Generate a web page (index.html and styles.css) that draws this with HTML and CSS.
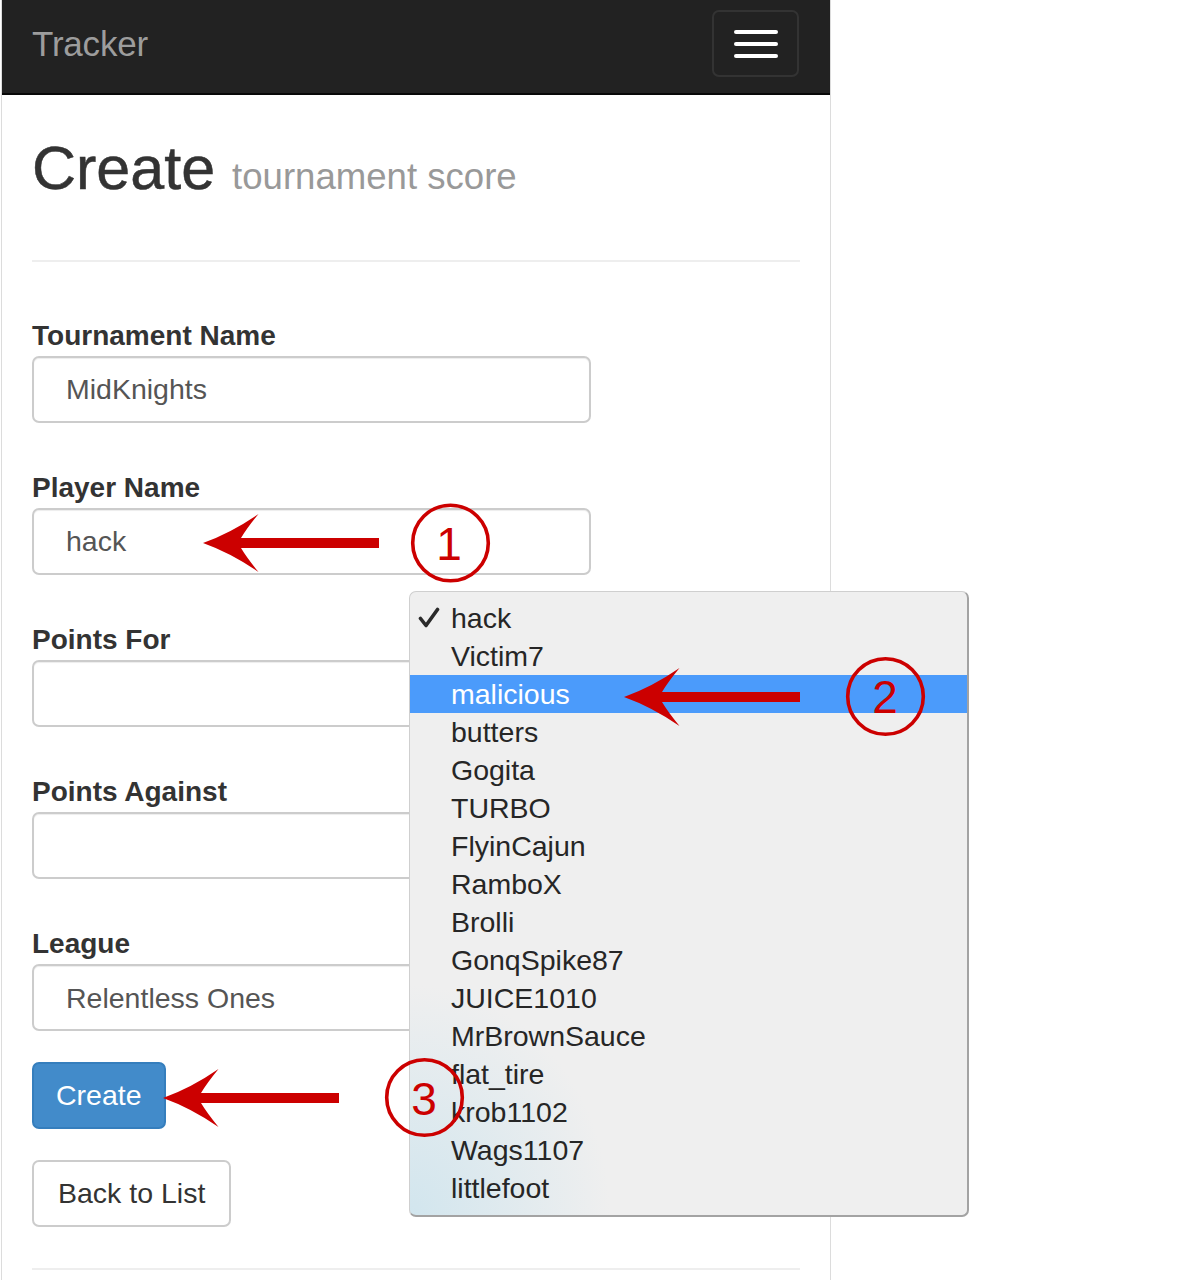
FILE: index.html
```html
<!DOCTYPE html>
<html lang="en">
<head>
<meta charset="utf-8">
<title>Create - Tracker</title>
<link rel="stylesheet" href="styles.css">
</head>
<body>
<div class="page">
  <nav class="navbar">
    <a class="brand">Tracker</a>
    <button class="toggle" type="button" aria-label="Toggle navigation">
      <span class="bar"></span><span class="bar"></span><span class="bar"></span>
    </button>
  </nav>
  <main class="container">
    <div class="page-header">
      <h1>Create <small>tournament score</small></h1>
    </div>
    <form class="form">
      <div class="form-group">
        <label class="label">Tournament Name</label>
        <input class="control" type="text" value="MidKnights">
      </div>
      <div class="form-group">
        <label class="label">Player Name</label>
        <input class="control" type="text" value="hack">
      </div>
      <div class="form-group">
        <label class="label">Points For</label>
        <input class="control" type="text" value="">
      </div>
      <div class="form-group">
        <label class="label">Points Against</label>
        <input class="control" type="text" value="">
      </div>
      <div class="form-group last">
        <label class="label">League</label>
        <select class="control select"><option>Relentless Ones</option></select>
      </div>
      <div class="btn-row">
        <button class="btn btn-primary" type="button">Create</button>
      </div>
      <div class="btn-row">
        <a class="btn btn-default">Back to List</a>
      </div>
    </form>
    <div class="rule"></div>
  </main>
</div>

<div class="menu">
  <div class="opt selected"><svg class="check" width="22" height="22" viewBox="0 0 22 22"><path d="M2.5 11.5 L8 18.5 L19.5 2.5" fill="none" stroke="#2a2a2a" stroke-width="3.6" stroke-linecap="round" stroke-linejoin="round"/></svg>hack</div>
  <div class="opt">Victim7</div>
  <div class="opt active">malicious</div>
  <div class="opt">butters</div>
  <div class="opt">Gogita</div>
  <div class="opt">TURBO</div>
  <div class="opt">FlyinCajun</div>
  <div class="opt">RamboX</div>
  <div class="opt">Brolli</div>
  <div class="opt">GonqSpike87</div>
  <div class="opt">JUICE1010</div>
  <div class="opt">MrBrownSauce</div>
  <div class="opt">flat_tire</div>
  <div class="opt">krob1102</div>
  <div class="opt">Wags1107</div>
  <div class="opt">littlefoot</div>
</div>

<svg class="annotations" width="1200" height="1280" viewBox="0 0 1200 1280">
  <defs>
    <path id="arrow" d="M0 0 Q28 -10 55.5 -29 Q44 -15 38 -5 L176 -5 L176 5 L38 5 Q44 15 55.5 29 Q28 10 0 0 Z" fill="#cc0000"/>
  </defs>
  <use href="#arrow" x="203" y="543"/>
  <use href="#arrow" x="624" y="697"/>
  <use href="#arrow" x="163" y="1098"/>
  <circle cx="450.5" cy="543" r="37.8" fill="none" stroke="#cc0000" stroke-width="3.6"/>
  <circle cx="885.5" cy="696.5" r="37.8" fill="none" stroke="#cc0000" stroke-width="3.6"/>
  <circle cx="424.5" cy="1097.5" r="37.8" fill="none" stroke="#cc0000" stroke-width="3.6"/>
  <text class="num" x="449" y="560">1</text>
  <text class="num" x="885" y="713">2</text>
  <text class="num" x="424" y="1115">3</text>
</svg>
</body>
</html>
```

FILE: styles.css
```css
html, body {
  margin: 0;
  padding: 0;
  background: #fff;
}

body {
  font-family: "Liberation Sans", Arial, Helvetica, sans-serif;
  color: #333;
}

.page {
  margin-left: 1px;
  width: 828px;
  min-height: 1280px;
  border-left: 1px solid #dcdcdc;
  border-right: 1px solid #dcdcdc;
}

/* Navbar */
.navbar {
  height: 93px;
  background: #222;
  border-bottom: 2px solid #080808;
  display: flex;
  justify-content: space-between;
  align-items: flex-start;
  padding: 0 31px 0 30px;
}

.brand {
  font-size: 35px;
  line-height: 88px;
  color: #9d9d9d;
  letter-spacing: -0.2px;
}

.toggle {
  box-sizing: border-box;
  margin-top: 10px;
  width: 87px;
  height: 67px;
  background: transparent;
  border: 2px solid #333;
  border-radius: 7px;
  display: flex;
  flex-direction: column;
  justify-content: center;
  align-items: center;
  gap: 8px;
  padding: 0;
}

.bar {
  display: block;
  width: 44px;
  height: 4px;
  border-radius: 2px;
  background: #fff;
}

/* Content */
.container {
  padding: 0 30px;
}

.page-header {
  margin-top: 40px;
  padding-bottom: 59px;
  border-bottom: 2px solid #eee;
}

.page-header h1 {
  margin: 0;
  font-size: 61px;
  line-height: 66px;
  height: 66px;
  font-weight: 400;
  color: #333;
  -webkit-text-stroke: 0.5px #333;
}

.page-header h1 small {
  font-size: 36.6px;
  line-height: 1;
  color: #999;
  -webkit-text-stroke: 0;
}

.form {
  margin-top: 57px;
}

.form-group {
  margin-bottom: 48px;
}

.form-group.last {
  margin-bottom: 31px;
}

.label {
  display: block;
  font-size: 28px;
  font-weight: 700;
  line-height: 34px;
  margin-bottom: 3px;
  color: #333;
}

.control {
  display: block;
  box-sizing: border-box;
  width: 559px;
  height: 67px;
  margin: 0;
  padding: 0 30px 0 32px;
  border: 2px solid #ccc;
  border-radius: 7px;
  background: #fff;
  box-shadow: inset 0 1px 1px rgba(0, 0, 0, 0.075);
  font-family: inherit;
  font-size: 28.5px;
  color: #555;
  outline: none;
}

.select {
  -webkit-appearance: none;
  appearance: none;
}

.btn-row {
  margin-bottom: 31px;
}

.btn {
  display: inline-block;
  box-sizing: border-box;
  height: 67px;
  padding: 0 23px;
  border: 2px solid transparent;
  border-radius: 7px;
  font-family: inherit;
  font-size: 28.5px;
  line-height: 63px;
  cursor: pointer;
  vertical-align: top;
}

.btn-primary {
  padding: 0 22px;
  background: #428bca;
  border-color: #357ebd;
  color: #fff;
}

.btn-default {
  padding: 0 24px;
  background: #fff;
  border-color: #ccc;
  color: #333;
}

.rule {
  margin-top: 41px;
  border-top: 2px solid #eee;
}

/* Dropdown popup (overlay) */
.menu {
  position: absolute;
  left: 409px;
  top: 591px;
  width: 560px;
  height: 626px;
  box-sizing: border-box;
  padding: 7px 0 9px;
  border: 1px solid #cfcfcf;
  border-right: 2px solid #a3a3a3;
  border-bottom: 2px solid #a3a3a3;
  border-radius: 7px;
  background:
    radial-gradient(ellipse 200px 230px at 0% 100%, rgba(208, 229, 238, 0.95), rgba(239, 239, 239, 0) 100%),
    #efefef;
  overflow: hidden;
}

.opt {
  position: relative;
  height: 38px;
  line-height: 38px;
  padding-left: 41px;
  font-size: 28.5px;
  color: #262626;
  white-space: nowrap;
}

.opt.active {
  background: #4b9bfb;
  color: #fff;
}

.check {
  position: absolute;
  left: 8px;
  top: 8px;
}

/* Annotations overlay */
.annotations {
  position: absolute;
  left: 0;
  top: 0;
  pointer-events: none;
}

.num {
  font-family: "Liberation Sans", Arial, sans-serif;
  font-size: 46px;
  fill: #cc0000;
  text-anchor: middle;
}
```
